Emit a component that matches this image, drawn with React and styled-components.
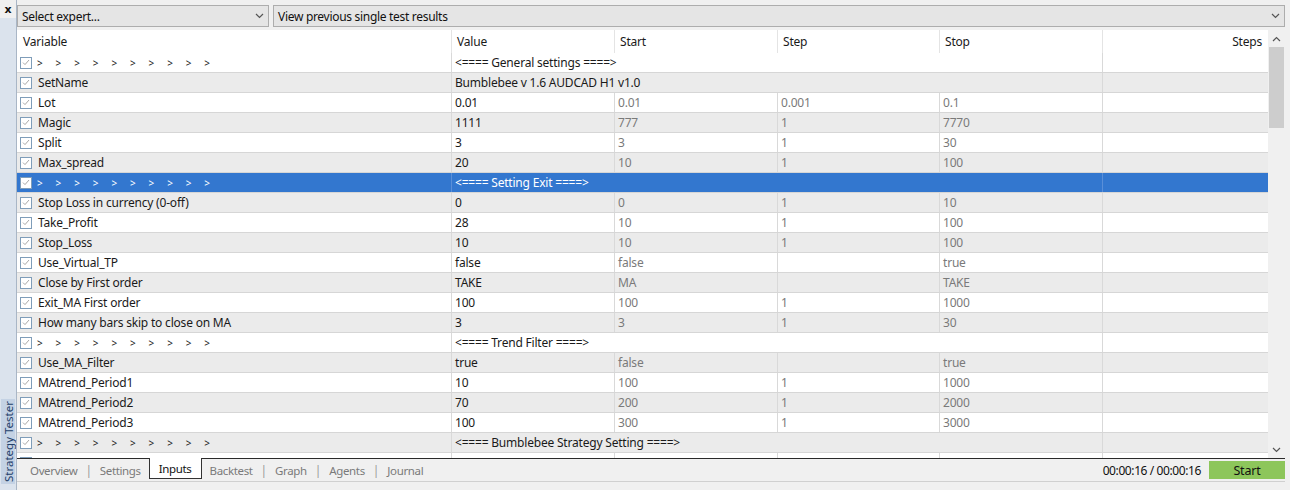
import React from 'react';
import styled, { createGlobalStyle } from 'styled-components';

const GlobalStyle = createGlobalStyle`
  html, body { margin: 0; padding: 0; }
  body {
    width: 1290px;
    height: 490px;
    overflow: hidden;
    background: #f0f0f0;
    font-family: "Noto Sans", "Open Sans", "Liberation Sans", sans-serif;
    font-size: 12px;
    letter-spacing: -0.2px;
    color: #1a1a1a;
  }
`;

const Window = styled.div`
  display: flex;
  width: 1290px;
  height: 490px;
  background: #f0f0f0;
`;

const SideStrip = styled.div`
  width: 16px;
  display: flex;
  flex-direction: column;
  align-items: center;
  border-right: 1px solid #a9b6c6;
  background: #dbe3ed;
`;

const CloseMark = styled.div`
  height: 18px;
  width: 16px;
  background: #f0f0f0;
  display: flex;
  align-items: center;
  justify-content: center;
  font-family: "DejaVu Sans", sans-serif;
  font-weight: bold;
  font-size: 11px;
  color: #111;
`;

const SideTitle = styled.div`
  margin-top: auto;
  margin-bottom: 6px;
  writing-mode: vertical-rl;
  transform: rotate(180deg);
  font-size: 11.5px;
  letter-spacing: 0;
  color: #23406b;
  background: #c4d2e4;
  padding: 2px 0;
  width: 14px;
  display: flex;
  align-items: center;
`;

const Main = styled.div`
  flex: 1;
  display: flex;
  flex-direction: column;
  min-width: 0;
  margin-right: 5px;
`;

const Toolbar = styled.div`
  height: 30px;
  display: flex;
  align-items: center;
  gap: 4px;
  padding-top: 2px;
  box-sizing: border-box;
`;

const Combo = styled.div`
  height: 22px;
  width: ${p => p.$w || 'auto'};
  flex: ${p => (p.$grow ? 1 : 'none')};
  box-sizing: border-box;
  background: #e5e5e5;
  border: 1px solid #adadad;
  display: flex;
  align-items: center;
  padding: 0 4px;
  font-size: 12px;
  color: #111;
`;

const ComboText = styled.span`
  flex: 1;
  letter-spacing: -0.3px;
`;

const Grid = styled.div`
  flex: 1;
  display: flex;
  background: #fff;
  min-height: 0;
`;

const Table = styled.div`
  flex: 1;
  display: flex;
  flex-direction: column;
  min-width: 0;
`;

const cols = '434px 163px 163px 162px 163px 1fr';

const HeaderRow = styled.div`
  display: grid;
  grid-template-columns: ${cols};
  height: 23px;
  align-items: center;
  background: #fff;
`;

const HeadCell = styled.div`
  height: 100%;
  display: flex;
  align-items: center;
  justify-content: ${p => (p.$right ? 'flex-end' : 'flex-start')};
  padding: 0 6px 0 ${p => (p.$first ? '6px' : '5px')};
  border-left: ${p => (p.$first ? 'none' : '1px solid #e4e4e4')};
  font-size: 12px;
  color: #1a1a1a;
  box-sizing: border-box;
`;

const Body = styled.div`
  flex: 1;
  overflow: hidden;
`;

const Row = styled.div`
  display: grid;
  grid-template-columns: ${cols};
  height: 20px;
  box-sizing: border-box;
  border-bottom: 1px solid #d6d6d6;
  background: ${p => (p.$selected ? '#3377cf' : p.$odd ? '#ebebeb' : '#ffffff')};
  color: ${p => (p.$selected ? '#ffffff' : '#1a1a1a')};
`;

const Cell = styled.div`
  display: flex;
  align-items: center;
  overflow: hidden;
  white-space: nowrap;
  padding-left: 3px;
  border-left: ${p => (p.$first ? 'none' : `1px solid ${p.$sel ? '#5a8fd8' : '#d9d9d9'}`)};
  grid-column: ${p => p.$span || 'auto'};
  color: ${p => (p.$sel ? '#fff' : p.$dim ? '#7a7a7a' : '#1a1a1a')};
  box-sizing: border-box;
`;

const Check = styled.span`
  width: 12px;
  height: 12px;
  box-sizing: border-box;
  border: 1px solid #7f9db9;
  background: #fff;
  margin-right: 6px;
  display: flex;
  align-items: center;
  justify-content: center;
  flex: none;
`;

const Arrows = styled.span`
  display: flex;
  font-size: 10px;
  margin-left: -1px;
`;

const Arrow = styled.span`
  width: 18.6px;
  display: inline-block;
`;

const Scrollbar = styled.div`
  width: 17px;
  background: #f0f0f0;
  display: flex;
  flex-direction: column;
  align-items: center;
`;

const ScrollBtn = styled.div`
  height: 17px;
  width: 17px;
  display: flex;
  align-items: center;
  justify-content: center;
`;

const Thumb = styled.div`
  width: 15px;
  height: 81px;
  background: #cdcdcd;
`;

const Spacer = styled.div`
  flex: 1;
`;

const TabBar = styled.div`
  height: 22px;
  display: flex;
  align-items: stretch;
  border-top: 1px solid #2a2a2a;
  background: #f0f0f0;
  padding-left: 5px;
`;

const Tab = styled.div`
  display: flex;
  align-items: center;
  padding: 0 ${p => (p.$active ? '9px' : '8px')};
  margin-top: ${p => (p.$active ? '-1px' : '0')};
  font-size: 11.5px;
  letter-spacing: -0.35px;
  color: ${p => (p.$active ? '#111' : '#7a7a7a')};
  background: ${p => (p.$active ? '#fff' : 'transparent')};
  border: ${p => (p.$active ? '1px solid #333' : 'none')};
  border-top: none;
  height: ${p => (p.$active ? '21px' : 'auto')};
  box-sizing: border-box;
`;

const TabSep = styled.span`
  align-self: center;
  color: #9a9a9a;
  font-size: 12px;
`;

const Timer = styled.div`
  margin-left: auto;
  display: flex;
  align-items: center;
  font-size: 12px;
  letter-spacing: -0.4px;
  color: #111;
  margin-right: 8px;
`;

const StartButton = styled.div`
  width: 76px;
  margin: 2px 0;
  background: #8dc65b;
  display: flex;
  align-items: center;
  justify-content: center;
  font-size: 12.5px;
  color: #111;
`;

const BottomStrip = styled.div`
  height: 8px;
  border-top: 1px solid #d0d0d0;
  background: #f0f0f0;
`;

const Chevron = ({ up, color = '#555' }) => (
  <svg width="9" height="6" viewBox="0 0 9 6">
    <path d={up ? 'M1 5 L4.5 1.5 L8 5' : 'M1 1 L4.5 4.5 L8 1'} fill="none" stroke={color} strokeWidth="1.2" />
  </svg>
);

const CheckMark = () => (
  <svg width="8" height="7" viewBox="0 0 8 7">
    <path d="M1 3.6 L3 5.6 L7 1" fill="none" stroke="#a8a8a8" strokeWidth="1" />
  </svg>
);

const rows = [
  { group: '<==== General settings ====>' },
  { name: 'SetName', value: 'Bumblebee v 1.6 AUDCAD H1 v1.0', span: true },
  { name: 'Lot', value: '0.01', start: '0.01', step: '0.001', stop: '0.1' },
  { name: 'Magic', value: '1111', start: '777', step: '1', stop: '7770' },
  { name: 'Split', value: '3', start: '3', step: '1', stop: '30' },
  { name: 'Max_spread', value: '20', start: '10', step: '1', stop: '100' },
  { group: '<==== Setting Exit ====>', selected: true },
  { name: 'Stop Loss in currency (0-off)', value: '0', start: '0', step: '1', stop: '10' },
  { name: 'Take_Profit', value: '28', start: '10', step: '1', stop: '100' },
  { name: 'Stop_Loss', value: '10', start: '10', step: '1', stop: '100' },
  { name: 'Use_Virtual_TP', value: 'false', start: 'false', step: '', stop: 'true' },
  { name: 'Close by First order', value: 'TAKE', start: 'MA', step: '', stop: 'TAKE' },
  { name: 'Exit_MA First order', value: '100', start: '100', step: '1', stop: '1000' },
  { name: 'How many bars skip to close on MA', value: '3', start: '3', step: '1', stop: '30' },
  { group: '<==== Trend Filter ====>' },
  { name: 'Use_MA_Filter', value: 'true', start: 'false', step: '', stop: 'true' },
  { name: 'MAtrend_Period1', value: '10', start: '100', step: '1', stop: '1000' },
  { name: 'MAtrend_Period2', value: '70', start: '200', step: '1', stop: '2000' },
  { name: 'MAtrend_Period3', value: '100', start: '300', step: '1', stop: '3000' },
  { group: '<==== Bumblebee Strategy Setting ====>' },
  { name: '', value: '', start: '', step: '', stop: '' },
];

const tabs = ['Overview', 'Settings', 'Inputs', 'Backtest', 'Graph', 'Agents', 'Journal'];

function InputRow({ row, index }) {
  const sel = !!row.selected;
  const first = (
    <Cell $first $sel={sel}>
      <Check><CheckMark /></Check>
      {row.group ? (
        <Arrows>
          {Array.from({ length: 10 }).map((_, i) => <Arrow key={i}>&gt;</Arrow>)}
        </Arrows>
      ) : (
        row.name
      )}
    </Cell>
  );
  if (row.group || row.span) {
    return (
      <Row $odd={index % 2 === 1} $selected={sel}>
        {first}
        <Cell $span="2 / 6" $sel={sel}>{row.group || row.value}</Cell>
        <Cell $sel={sel} />
      </Row>
    );
  }
  return (
    <Row $odd={index % 2 === 1} $selected={sel}>
      {first}
      <Cell $sel={sel}>{row.value}</Cell>
      <Cell $dim $sel={sel}>{row.start}</Cell>
      <Cell $dim $sel={sel}>{row.step}</Cell>
      <Cell $dim $sel={sel}>{row.stop}</Cell>
      <Cell $sel={sel} />
    </Row>
  );
}

export default function App() {
  return (
    <>
      <GlobalStyle />
      <Window>
        <SideStrip>
          <CloseMark>x</CloseMark>
          <SideTitle>Strategy Tester</SideTitle>
        </SideStrip>
        <Main>
          <Toolbar>
            <Combo $w="252px">
              <ComboText>Select expert...</ComboText>
              <Chevron />
            </Combo>
            <Combo $grow>
              <ComboText>View previous single test results</ComboText>
              <Chevron />
            </Combo>
          </Toolbar>
          <Grid>
            <Table>
              <HeaderRow>
                <HeadCell $first>Variable</HeadCell>
                <HeadCell>Value</HeadCell>
                <HeadCell>Start</HeadCell>
                <HeadCell>Step</HeadCell>
                <HeadCell>Stop</HeadCell>
                <HeadCell $right>Steps</HeadCell>
              </HeaderRow>
              <Body>
                {rows.map((r, i) => <InputRow key={i} row={r} index={i} />)}
              </Body>
            </Table>
            <Scrollbar>
              <ScrollBtn><Chevron up /></ScrollBtn>
              <Thumb />
              <Spacer />
              <ScrollBtn><Chevron /></ScrollBtn>
            </Scrollbar>
          </Grid>
          <TabBar>
            {tabs.map((t, i) => (
              <React.Fragment key={t}>
                {i > 0 && t !== 'Inputs' && tabs[i - 1] !== 'Inputs' && <TabSep>|</TabSep>}
                <Tab $active={t === 'Inputs'}>{t}</Tab>
              </React.Fragment>
            ))}
            <Timer>00:00:16 / 00:00:16</Timer>
            <StartButton>Start</StartButton>
          </TabBar>
          <BottomStrip />
        </Main>
      </Window>
    </>
  );
}
